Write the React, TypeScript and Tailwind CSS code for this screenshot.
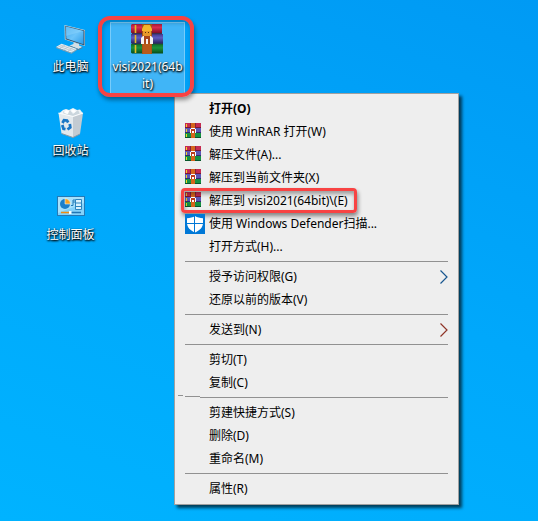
import type { ReactNode } from "react";
import clsx from "clsx";

type MenuItem = {
  label: string;
  icon?: ReactNode;
  bold?: boolean;
  submenu?: string;
  marked?: boolean;
};

function ThisPcIcon() {
  return (
    <svg width="32" height="32" viewBox="0 0 32 32" aria-hidden="true">
      <defs>
        <linearGradient id="pcScreen" x1="0" y1="0" x2="1" y2="1">
          <stop offset="0" stopColor="#3aa6ee" />
          <stop offset="0.5" stopColor="#6cc4fa" />
          <stop offset="1" stopColor="#2b9be8" />
        </linearGradient>
      </defs>
      <path d="M9.500 2 30 7V23L9.800 16.500Z" fill="#cfdbe2" />
      <path d="M10.300 2.800 29.500 7.500V22.500L10.600 16.200Z" fill="#35516a" />
      <path d="M11 3.600 28.500 8V21.300L11.300 15.600Z" fill="url(#pcScreen)" />
      <path d="M11 3.600 28.500 8 11.200 13Z" fill="#8ed3fb" fillOpacity="0.5" />
      <path d="M18.500 19.200 24 21V22.500L27.500 24 23.500 26 14.500 22.500 18.500 21Z" fill="#d5dfe5" />
      <path d="M14.500 22.500 23.500 26 27.500 24V25L23.500 27 14.500 23.500Z" fill="#5f7a8c" />
      <path d="M6.500 20.800 22 26 16.500 29.700 1 24Z" fill="#e6edf1" />
      <path d="M1 24 16.500 29.700 22 26V27L16.500 30.800 1 25Z" fill="#8a9daa" />
      <path d="M5 21.900 20.500 27.200M3 23 18.500 28.500M10 22 4.500 25.500M14 23.300 8.500 27M18 24.600 12.500 28.500" stroke="#aebdc7" strokeWidth="0.7" />
    </svg>
  );
}

function RecycleBinIcon() {
  return (
    <svg width="32" height="32" viewBox="0 0 32 32" aria-hidden="true">
      <path d="M4 6.500 8 3l3-1 3 1 4-2 4 2 3-.5 3 4-4 3H8Z" fill="#eef3f6" />
      <path d="m8 4 4 3 3-4 3 4 5-4 2 4-5 3H9Z" fill="#cbd6dd" />
      <path d="m11 3 3 1-1 3-4-1ZM18 2l3 2-2 2-3-2Z" fill="#fff" />
      <path d="M3.500 6 18 9.500V30.500L6.500 26.500Z" fill="#e3e9ed" />
      <path d="M18 9.500 28 6 25 27 18 30.500Z" fill="#c3cbd2" />
      <path d="M3.500 6 18 9.500 28 6" fill="none" stroke="#fafcfd" strokeWidth="1.200" />
      <path d="M6.500 26.500 18 30.500 25 27" fill="none" stroke="#8b98a2" />
      <g fill="none" stroke="#1976c5" strokeWidth="2.800">
        <path d="M7.500 16 9 13.200 12 13.500 13.200 15.500" />
        <path d="M7.300 18 8.500 21.800 10.500 22.200" />
        <path d="M14.800 17 15.300 20.300 12.500 22.500" />
      </g>
    </svg>
  );
}

function ControlPanelIcon() {
  return (
    <svg width="32" height="32" viewBox="0 0 32 32" aria-hidden="true">
      <rect x="2.500" y="5.500" width="27" height="19" fill="#84d2fa" stroke="#2579b5" />
      <path d="M3 6H29V12L3 22Z" fill="#a7e1fc" />
      <circle cx="10" cy="13" r="5" fill="#1b7fc9" />
      <path d="M10 13V7.500A5.500 5.500 0 0 1 15.500 13Z" fill="#f6a323" stroke="#e8f7ff" strokeWidth="0.600" />
      <path d="M16 14.500H18V11H20M18 11V9H20" fill="none" stroke="#247bb6" />
      <path d="M20.500 8.500H26.500V18.500H20.500ZM20.500 12H26.500M20.500 15.500H26.500" fill="#d9f2fe" stroke="#2d85bf" />
      <path d="M6 21.500H14" stroke="#f08c13" strokeWidth="1.500" />
      <path d="M16 21.500H26" stroke="#2176b5" strokeWidth="1.500" />
      <rect x="14" y="20" width="2.500" height="3" fill="#fff" />
    </svg>
  );
}

function WinRarIcon() {
  return (
    <svg width="34" height="32" viewBox="0 0 34 32" aria-hidden="true">
      <defs>
        <linearGradient id="bookRed" x1="0" y1="0" x2="0" y2="1">
          <stop offset="0" stopColor="#a41b3a" />
          <stop offset="0.35" stopColor="#d92d50" />
          <stop offset="1" stopColor="#790b25" />
        </linearGradient>
        <linearGradient id="bookBlue" x1="0" y1="0" x2="0" y2="1">
          <stop offset="0" stopColor="#433b91" />
          <stop offset="0.4" stopColor="#5f5cbf" />
          <stop offset="1" stopColor="#28205f" />
        </linearGradient>
        <linearGradient id="bookGreen" x1="0" y1="0" x2="0" y2="1">
          <stop offset="0" stopColor="#126d2b" />
          <stop offset="0.4" stopColor="#1c933c" />
          <stop offset="1" stopColor="#074b1b" />
        </linearGradient>
      </defs>
      <path d="M0 2 1 1H31V10.500H1L0 9.500Z" fill="url(#bookRed)" />
      <path d="M0 11H32V20.500H0Z" fill="url(#bookBlue)" />
      <path d="M0 21H32V30.500H1L0 29.500Z" fill="url(#bookGreen)" />
      <path d="M4.500 2V10M4.500 12V20M4.500 22V30" stroke="#e6bd25" strokeWidth="1.600" />
      <path d="M1 10.700H31M1 20.700H32" stroke="#281628" strokeWidth="0.800" />
      <path d="M11 1H21V31H11Z" fill="#a85313" />
      <path d="M12 21H20V31H12Z" fill="#b85a1a" />
      <path d="M11 6 13 2H19L21 6V8H11Z" fill="#f5b52c" />
      <path d="M12 8H20V12L18 14H14L12 12Z" fill="#e8992a" />
      <path d="M14 9.500H15M17 9.500H18" stroke="#55300e" />
      <path d="M10 15 12 13H20L22 15V21H19V16H13V21H10Z" fill="#f6f2ef" />
      <path d="M13 13H19V20H13Z" fill="#a9461a" />
      <path d="M15 16H17V21H15Z" fill="#f6f2ef" />
    </svg>
  );
}

function WinRarSmallIcon() {
  return (
    <svg width="16" height="17" viewBox="0 0 16 17" shapeRendering="crispEdges" aria-hidden="true">
      <path d="M0 0H16V5H0Z" fill="#c52b50" />
      <path d="M0 4H16V5H0Z" fill="#7c1733" />
      <path d="M0 5H16V10H0Z" fill="#5b56b4" />
      <path d="M0 9H16V10H0Z" fill="#332b70" />
      <path d="M0 10H16V15H0Z" fill="#159142" />
      <path d="M0 14H16V15H0Z" fill="#07562a" />
      <path d="M1 1H2V4H1ZM1 6H2V9H1ZM1 11H2V14H1Z" fill="#f4d229" />
      <path d="M6 0H10V15H6Z" fill="#d5651b" />
      <path d="M5 0H6V5H5ZM10 0H11V5H10Z" fill="#81203a" />
      <path d="M5 6H6V10H5ZM6 5H10V6H6ZM10 6H11V10H10Z" fill="#fff" />
      <path d="M6 6H10V10H6Z" fill="#b83a1e" />
      <path d="M7 8H9V10H7Z" fill="#fff" />
    </svg>
  );
}

function DefenderIcon() {
  return (
    <svg width="20" height="20" viewBox="0 0 20 20" aria-hidden="true">
      <path d="M0 0H20V20H0Z" fill="#0078d7" />
      <path d="M10 2C8 3.300 5 4.200 2 4.200V9C2 13.500 5.500 16.500 10 18.500 14.500 16.500 18 13.500 18 9V4.200C15 4.200 12 3.300 10 2Z" fill="#fff" />
      <path d="M9.500 1.500V19M2 9.500H18" stroke="#0078d7" />
    </svg>
  );
}

const menuGroups: MenuItem[][] = [
  [
    { label: "打开(O)", bold: true },
    { label: "使用 WinRAR 打开(W)", icon: <WinRarSmallIcon /> },
    { label: "解压文件(A)...", icon: <WinRarSmallIcon /> },
    { label: "解压到当前文件夹(X)", icon: <WinRarSmallIcon /> },
    { label: "解压到 visi2021(64bit)\\(E)", icon: <WinRarSmallIcon />, marked: true },
    { label: "使用 Windows Defender扫描...", icon: <DefenderIcon /> },
    { label: "打开方式(H)..." },
  ],
  [
    { label: "授予访问权限(G)", submenu: "text-[#17568f]" },
    { label: "还原以前的版本(V)" },
  ],
  [{ label: "发送到(N)", submenu: "text-[#8f3427]" }],
  [{ label: "剪切(T)" }, { label: "复制(C)" }],
  [{ label: "剪建快捷方式(S)" }, { label: "删除(D)" }, { label: "重命名(M)" }],
  [{ label: "属性(R)" }],
];

function Separator({ broken }: { broken: boolean }) {
  if (broken) {
    return (
      <div role="separator" className="flex h-[7px] items-start pr-[10px] pl-[3px]">
        <span className="mt-px h-px w-[5px] bg-[#919191]" />
        <span className="mt-[2px] ml-[2px] h-px w-[15px] bg-[#919191]" />
        <span className="mt-[3px] h-px flex-1 bg-[#919191]" />
      </div>
    );
  }
  return (
    <div role="separator" className="h-[7px] px-[10px] pt-[3px]">
      <div className="h-px bg-[#919191]" />
    </div>
  );
}

function MenuRow({ item }: { item: MenuItem }) {
  return (
    <button
      type="button"
      role="menuitem"
      className="relative flex h-[23px] w-full items-center px-[10px] text-left"
    >
      <span className="flex w-6 shrink-0 items-center">{item.icon}</span>
      <span className={clsx("flex-1 whitespace-nowrap", item.bold && "font-bold")}>{item.label}</span>
      {item.submenu && (
        <svg width="8" height="14" viewBox="0 0 8 14" className={item.submenu} aria-hidden="true">
          <path d="M0.500 0.500 7 7 0.500 13.500" fill="none" stroke="currentColor" strokeWidth="1.200" />
        </svg>
      )}
      {item.marked && (
        <span className="absolute -top-px left-[6px] h-[25px] w-[176px] rounded border-3 border-[#f84343] shadow-[1px_3px_4px_rgba(0,0,0,0.45),inset_1px_3px_4px_rgba(0,0,0,0.35)]" />
      )}
    </button>
  );
}

function ContextMenu() {
  return (
    <div
      role="menu"
      className="absolute top-[93px] left-[174px] w-[285px] border border-[#a0a0a0] bg-[#eeeeee] pt-[3px] pb-1 text-black shadow-[3px_3px_3px_rgba(0,0,0,0.65)]"
    >
      {menuGroups.map((group, i) => (
        <div key={i}>
          {i > 0 && <Separator broken={i === 4} />}
          {group.map((item) => (
            <MenuRow key={item.label} item={item} />
          ))}
        </div>
      ))}
    </div>
  );
}

function Shortcut({ label, icon, selected }: { label: string; icon: ReactNode; selected?: boolean }) {
  return (
    <button
      type="button"
      className={clsx(
        "relative flex w-[75px] flex-col items-center border pb-px",
        selected ? "border-[#78ccfa] bg-[#40b5f7]" : "border-transparent"
      )}
    >
      {icon}
      <span className="mt-[3px] text-center leading-[17px] break-all text-white [text-shadow:1px_1px_2px_#000,0_1px_2px_#000]">
        {label}
      </span>
      {selected && (
        <span className="absolute -top-[7px] -right-[10px] -bottom-1 -left-[13px] z-10 rounded-xl border-4 border-[#f84343] shadow-[1px_3px_4px_rgba(0,0,0,0.4),inset_1px_3px_4px_rgba(0,0,0,0.2)]" />
      )}
    </button>
  );
}

export default function App() {
  return (
    <main className="relative min-h-screen bg-linear-[200deg] from-[#009af4] via-[#00a8fb] to-[#00b3ff] font-['Noto_Sans','Noto_Sans_CJK_SC',sans-serif] text-[12px]">
      <ContextMenu />
      <div className="flex items-start gap-[2px] pt-[22px] pl-[33px]">
        <div className="flex flex-col gap-[29px]">
          <Shortcut label="此电脑" icon={<ThisPcIcon />} />
          <Shortcut label="回收站" icon={<RecycleBinIcon />} />
          <Shortcut label="控制面板" icon={<ControlPanelIcon />} />
        </div>
        <Shortcut label="visi2021(64bit)" icon={<WinRarIcon />} selected />
      </div>
    </main>
  );
}
